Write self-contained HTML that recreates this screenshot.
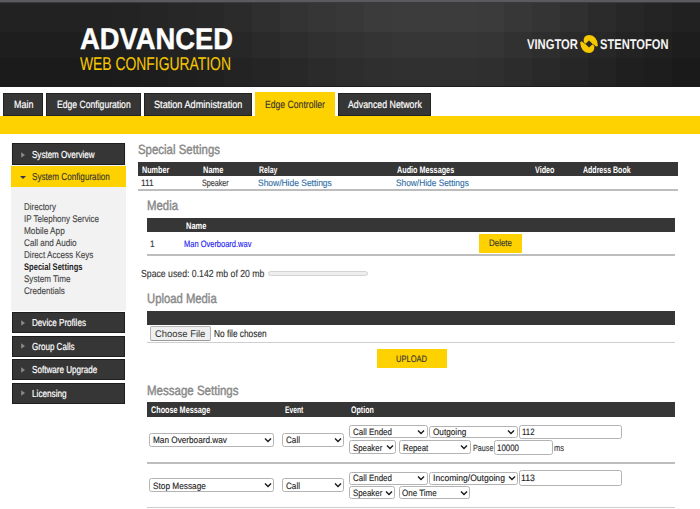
<!DOCTYPE html>
<html><head><meta charset="utf-8"><style>
html,body{margin:0;padding:0;width:700px;height:509px;overflow:hidden;background:#fff;}
body{position:relative;font-family:"Liberation Sans",sans-serif;}
.t{position:absolute;white-space:nowrap;transform-origin:0 0;text-rendering:geometricPrecision;}
#hdr{display:none;
background:linear-gradient(90deg,#1e1e1e 0%,#222 20%,#2e2e2e 40%,#353535 58%,#2a2a2a 75%,#1c1c1c 100%);}
#hdr:before{content:"";position:absolute;left:0;top:0;width:700px;height:2px;background:#5a5b5f;}
#hdr:after{content:"";position:absolute;left:0;top:2px;width:700px;height:1px;background:#1a1a1a;}
</style></head><body>
<div id="hdr"></div>
<div style="position:absolute;left:0px;top:2px;width:28px;height:30px;background:rgb(34,34,34)"></div>
<div style="position:absolute;left:0px;top:32px;width:28px;height:26px;background:rgb(30,30,30)"></div>
<div style="position:absolute;left:0px;top:58px;width:28px;height:28px;background:rgb(27,27,27)"></div>
<div style="position:absolute;left:28px;top:2px;width:28px;height:30px;background:rgb(34,34,34)"></div>
<div style="position:absolute;left:28px;top:32px;width:28px;height:26px;background:rgb(30,30,30)"></div>
<div style="position:absolute;left:28px;top:58px;width:28px;height:28px;background:rgb(27,27,27)"></div>
<div style="position:absolute;left:56px;top:2px;width:28px;height:30px;background:rgb(34,34,34)"></div>
<div style="position:absolute;left:56px;top:32px;width:28px;height:26px;background:rgb(30,30,30)"></div>
<div style="position:absolute;left:56px;top:58px;width:28px;height:28px;background:rgb(27,27,27)"></div>
<div style="position:absolute;left:84px;top:2px;width:28px;height:30px;background:rgb(34,34,34)"></div>
<div style="position:absolute;left:84px;top:32px;width:28px;height:26px;background:rgb(31,31,31)"></div>
<div style="position:absolute;left:84px;top:58px;width:28px;height:28px;background:rgb(27,27,27)"></div>
<div style="position:absolute;left:112px;top:2px;width:28px;height:30px;background:rgb(35,35,35)"></div>
<div style="position:absolute;left:112px;top:32px;width:28px;height:26px;background:rgb(31,31,31)"></div>
<div style="position:absolute;left:112px;top:58px;width:28px;height:28px;background:rgb(28,28,28)"></div>
<div style="position:absolute;left:140px;top:2px;width:28px;height:30px;background:rgb(37,37,37)"></div>
<div style="position:absolute;left:140px;top:32px;width:28px;height:26px;background:rgb(33,33,33)"></div>
<div style="position:absolute;left:140px;top:58px;width:28px;height:28px;background:rgb(29,29,29)"></div>
<div style="position:absolute;left:168px;top:2px;width:28px;height:30px;background:rgb(39,39,39)"></div>
<div style="position:absolute;left:168px;top:32px;width:28px;height:26px;background:rgb(34,34,34)"></div>
<div style="position:absolute;left:168px;top:58px;width:28px;height:28px;background:rgb(31,31,31)"></div>
<div style="position:absolute;left:196px;top:2px;width:28px;height:30px;background:rgb(40,40,40)"></div>
<div style="position:absolute;left:196px;top:32px;width:28px;height:26px;background:rgb(36,36,36)"></div>
<div style="position:absolute;left:196px;top:58px;width:28px;height:28px;background:rgb(32,32,32)"></div>
<div style="position:absolute;left:224px;top:2px;width:28px;height:30px;background:rgb(43,43,43)"></div>
<div style="position:absolute;left:224px;top:32px;width:28px;height:26px;background:rgb(39,39,39)"></div>
<div style="position:absolute;left:224px;top:58px;width:28px;height:28px;background:rgb(35,35,35)"></div>
<div style="position:absolute;left:252px;top:2px;width:28px;height:30px;background:rgb(47,47,47)"></div>
<div style="position:absolute;left:252px;top:32px;width:28px;height:26px;background:rgb(42,42,42)"></div>
<div style="position:absolute;left:252px;top:58px;width:28px;height:28px;background:rgb(37,37,37)"></div>
<div style="position:absolute;left:280px;top:2px;width:28px;height:30px;background:rgb(51,51,51)"></div>
<div style="position:absolute;left:280px;top:32px;width:28px;height:26px;background:rgb(45,45,45)"></div>
<div style="position:absolute;left:280px;top:58px;width:28px;height:28px;background:rgb(40,40,40)"></div>
<div style="position:absolute;left:308px;top:2px;width:28px;height:30px;background:rgb(54,54,54)"></div>
<div style="position:absolute;left:308px;top:32px;width:28px;height:26px;background:rgb(48,48,48)"></div>
<div style="position:absolute;left:308px;top:58px;width:28px;height:28px;background:rgb(43,43,43)"></div>
<div style="position:absolute;left:336px;top:2px;width:28px;height:30px;background:rgb(56,56,56)"></div>
<div style="position:absolute;left:336px;top:32px;width:28px;height:26px;background:rgb(50,50,50)"></div>
<div style="position:absolute;left:336px;top:58px;width:28px;height:28px;background:rgb(45,45,45)"></div>
<div style="position:absolute;left:364px;top:2px;width:28px;height:30px;background:rgb(59,59,59)"></div>
<div style="position:absolute;left:364px;top:32px;width:28px;height:26px;background:rgb(52,52,52)"></div>
<div style="position:absolute;left:364px;top:58px;width:28px;height:28px;background:rgb(47,47,47)"></div>
<div style="position:absolute;left:392px;top:2px;width:28px;height:30px;background:rgb(60,60,60)"></div>
<div style="position:absolute;left:392px;top:32px;width:28px;height:26px;background:rgb(54,54,54)"></div>
<div style="position:absolute;left:392px;top:58px;width:28px;height:28px;background:rgb(48,48,48)"></div>
<div style="position:absolute;left:420px;top:2px;width:28px;height:30px;background:rgb(60,60,60)"></div>
<div style="position:absolute;left:420px;top:32px;width:28px;height:26px;background:rgb(54,54,54)"></div>
<div style="position:absolute;left:420px;top:58px;width:28px;height:28px;background:rgb(48,48,48)"></div>
<div style="position:absolute;left:448px;top:2px;width:28px;height:30px;background:rgb(60,60,60)"></div>
<div style="position:absolute;left:448px;top:32px;width:28px;height:26px;background:rgb(54,54,54)"></div>
<div style="position:absolute;left:448px;top:58px;width:28px;height:28px;background:rgb(48,48,48)"></div>
<div style="position:absolute;left:476px;top:2px;width:28px;height:30px;background:rgb(59,59,59)"></div>
<div style="position:absolute;left:476px;top:32px;width:28px;height:26px;background:rgb(53,53,53)"></div>
<div style="position:absolute;left:476px;top:58px;width:28px;height:28px;background:rgb(47,47,47)"></div>
<div style="position:absolute;left:504px;top:2px;width:28px;height:30px;background:rgb(55,55,55)"></div>
<div style="position:absolute;left:504px;top:32px;width:28px;height:26px;background:rgb(49,49,49)"></div>
<div style="position:absolute;left:504px;top:58px;width:28px;height:28px;background:rgb(44,44,44)"></div>
<div style="position:absolute;left:532px;top:2px;width:28px;height:30px;background:rgb(52,52,52)"></div>
<div style="position:absolute;left:532px;top:32px;width:28px;height:26px;background:rgb(46,46,46)"></div>
<div style="position:absolute;left:532px;top:58px;width:28px;height:28px;background:rgb(41,41,41)"></div>
<div style="position:absolute;left:560px;top:2px;width:28px;height:30px;background:rgb(48,48,48)"></div>
<div style="position:absolute;left:560px;top:32px;width:28px;height:26px;background:rgb(42,42,42)"></div>
<div style="position:absolute;left:560px;top:58px;width:28px;height:28px;background:rgb(38,38,38)"></div>
<div style="position:absolute;left:588px;top:2px;width:28px;height:30px;background:rgb(43,43,43)"></div>
<div style="position:absolute;left:588px;top:32px;width:28px;height:26px;background:rgb(39,39,39)"></div>
<div style="position:absolute;left:588px;top:58px;width:28px;height:28px;background:rgb(35,35,35)"></div>
<div style="position:absolute;left:616px;top:2px;width:28px;height:30px;background:rgb(39,39,39)"></div>
<div style="position:absolute;left:616px;top:32px;width:28px;height:26px;background:rgb(35,35,35)"></div>
<div style="position:absolute;left:616px;top:58px;width:28px;height:28px;background:rgb(31,31,31)"></div>
<div style="position:absolute;left:644px;top:2px;width:28px;height:30px;background:rgb(36,36,36)"></div>
<div style="position:absolute;left:644px;top:32px;width:28px;height:26px;background:rgb(32,32,32)"></div>
<div style="position:absolute;left:644px;top:58px;width:28px;height:28px;background:rgb(29,29,29)"></div>
<div style="position:absolute;left:672px;top:2px;width:28px;height:30px;background:rgb(33,33,33)"></div>
<div style="position:absolute;left:672px;top:32px;width:28px;height:26px;background:rgb(29,29,29)"></div>
<div style="position:absolute;left:672px;top:58px;width:28px;height:28px;background:rgb(26,26,26)"></div>
<div style="position:absolute;left:700px;top:2px;width:28px;height:30px;background:rgb(30,30,30)"></div>
<div style="position:absolute;left:700px;top:32px;width:28px;height:26px;background:rgb(27,27,27)"></div>
<div style="position:absolute;left:700px;top:58px;width:28px;height:28px;background:rgb(24,24,24)"></div>
<div style="position:absolute;left:0px;top:0px;width:700px;height:2px;background:#5a5b5f"></div>
<div style="position:absolute;left:0px;top:2px;width:700px;height:1px;background:#3a3a3c"></div>
<div style="position:absolute;left:0px;top:86px;width:700px;height:1px;background:#1c1c1c"></div>
<div class="t" style="left:80px;top:25px;font-size:29.9px;line-height:29.9px;color:#fff;font-weight:bold;transform:scaleX(0.9149);-webkit-text-stroke:0.4px #fff;">ADVANCED</div>
<div class="t" style="left:80.3px;top:55px;font-size:18.6px;line-height:18.6px;color:#f5c800;transform:scaleX(0.7468);-webkit-text-stroke:0.1px #f5c800;">WEB CONFIGURATION</div>
<div class="t" style="left:527px;top:37px;font-size:14.1px;line-height:14.1px;color:#f4f4f4;font-weight:bold;transform:scaleX(0.7971);">VINGTOR</div>
<div class="t" style="left:600px;top:37px;font-size:14.1px;line-height:14.1px;color:#f4f4f4;font-weight:bold;transform:scaleX(0.7901);">STENTOFON</div>
<svg style="position:absolute;left:578.8px;top:33.9px" width="20" height="20" viewBox="-10 -10 20 20">
<g fill="#f5c800">
<path id="lp" d="M -3.5,-0.3 L -5.3,-2.1 Q -6,-8.9 0.3,-8.9 Q 7.8,-8.6 8.8,1.0 Q 8.9,2.9 7.2,2.4 L 3.7,0 L 0,-3.6 Z"/>
<use href="#lp" transform="rotate(180)"/>
</g>
</svg>
<div style="position:absolute;left:3px;top:93px;width:40px;height:23px;background:#363636;box-shadow:inset 0 0 0 1px #222"></div>
<div class="t" style="left:13.6px;top:100px;font-size:10.5px;line-height:10.5px;color:#fff;transform:scaleX(0.8524);-webkit-text-stroke:0.2px;">Main</div>
<div style="position:absolute;left:46px;top:93px;width:95px;height:23px;background:#363636;box-shadow:inset 0 0 0 1px #222"></div>
<div class="t" style="left:56.6px;top:100px;font-size:10.5px;line-height:10.5px;color:#fff;transform:scaleX(0.8198);-webkit-text-stroke:0.2px;">Edge Configuration</div>
<div style="position:absolute;left:144px;top:93px;width:108px;height:23px;background:#363636;box-shadow:inset 0 0 0 1px #222"></div>
<div class="t" style="left:154px;top:100px;font-size:10.5px;line-height:10.5px;color:#fff;transform:scaleX(0.8705);-webkit-text-stroke:0.2px;">Station Administration</div>
<div style="position:absolute;left:255px;top:92px;width:80px;height:24px;background:#fed100"></div>
<div class="t" style="left:265px;top:100px;font-size:10.5px;line-height:10.5px;color:#333;transform:scaleX(0.8224);-webkit-text-stroke:0.12px;">Edge Controller</div>
<div style="position:absolute;left:338px;top:93px;width:93px;height:23px;background:#363636;box-shadow:inset 0 0 0 1px #222"></div>
<div class="t" style="left:348.1px;top:100px;font-size:10.5px;line-height:10.5px;color:#fff;transform:scaleX(0.8374);-webkit-text-stroke:0.2px;">Advanced Network</div>
<div style="position:absolute;left:0px;top:116px;width:700px;height:18.2px;background:#fed100"></div>
<div style="position:absolute;left:11px;top:141px;width:114.5px;height:169.5px;background:#f2f2f2"></div>
<div style="position:absolute;left:11px;top:141px;width:114.5px;height:2px;background:#fff"></div>
<div style="position:absolute;left:12px;top:143px;width:112.5px;height:21.5px;background:#363636;box-shadow:inset 0 0 0 1px #1e1e1e"></div>
<div class="t" style="left:32.3px;top:151px;font-size:10.1px;line-height:10.1px;color:#fff;transform:scaleX(0.7967);-webkit-text-stroke:0.2px;">System Overview</div>
<svg style="position:absolute;left:21px;top:151.8px" width="5" height="6" viewBox="0 0 5 6"><path d="M0.2,0.3 L4,3 L0.2,5.7 Z" fill="#8a8a8a"/></svg>
<div style="position:absolute;left:11px;top:166px;width:114.5px;height:21px;background:#fed100"></div>
<div class="t" style="left:32px;top:173px;font-size:10.1px;line-height:10.1px;color:#333;transform:scaleX(0.8057);-webkit-text-stroke:0.12px;">System Configuration</div>
<div style="position:absolute;left:20px;top:176px;width:0;height:0;border-top:3px solid #2f3550;border-left:3.5px solid transparent;border-right:3.5px solid transparent"></div>
<div class="t" style="left:23.7px;top:203px;font-size:9.7px;line-height:9.7px;color:#444;transform:scaleX(0.8246);-webkit-text-stroke:0.12px;">Directory</div>
<div class="t" style="left:23.7px;top:215px;font-size:9.7px;line-height:9.7px;color:#444;transform:scaleX(0.8262);-webkit-text-stroke:0.12px;">IP Telephony Service</div>
<div class="t" style="left:23.7px;top:227px;font-size:9.7px;line-height:9.7px;color:#444;transform:scaleX(0.8501);-webkit-text-stroke:0.12px;">Mobile App</div>
<div class="t" style="left:23.7px;top:239px;font-size:9.7px;line-height:9.7px;color:#444;transform:scaleX(0.8408);-webkit-text-stroke:0.12px;">Call and Audio</div>
<div class="t" style="left:23.7px;top:251px;font-size:9.7px;line-height:9.7px;color:#444;transform:scaleX(0.8372);-webkit-text-stroke:0.12px;">Direct Access Keys</div>
<div class="t" style="left:23.7px;top:263px;font-size:9.6px;line-height:9.6px;color:#222;font-weight:bold;transform:scaleX(0.7889);">Special Settings</div>
<div class="t" style="left:23.7px;top:275px;font-size:9.7px;line-height:9.7px;color:#444;transform:scaleX(0.8313);-webkit-text-stroke:0.12px;">System Time</div>
<div class="t" style="left:23.7px;top:287px;font-size:9.7px;line-height:9.7px;color:#444;transform:scaleX(0.8316);-webkit-text-stroke:0.12px;">Credentials</div>
<div style="position:absolute;left:12px;top:312.3px;width:112.5px;height:21.0px;background:#363636;box-shadow:inset 0 0 0 1px #1e1e1e"></div>
<div class="t" style="left:32.3px;top:319px;font-size:10.1px;line-height:10.1px;color:#fff;transform:scaleX(0.8017);-webkit-text-stroke:0.2px;">Device Profiles</div>
<svg style="position:absolute;left:21px;top:319.7px" width="5" height="6" viewBox="0 0 5 6"><path d="M0.2,0.3 L4,3 L0.2,5.7 Z" fill="#8a8a8a"/></svg>
<div style="position:absolute;left:12px;top:335.8px;width:112.5px;height:21.0px;background:#363636;box-shadow:inset 0 0 0 1px #1e1e1e"></div>
<div class="t" style="left:32.3px;top:343px;font-size:10.1px;line-height:10.1px;color:#fff;transform:scaleX(0.7970);-webkit-text-stroke:0.2px;">Group Calls</div>
<svg style="position:absolute;left:21px;top:343.2px" width="5" height="6" viewBox="0 0 5 6"><path d="M0.2,0.3 L4,3 L0.2,5.7 Z" fill="#8a8a8a"/></svg>
<div style="position:absolute;left:12px;top:359.3px;width:112.5px;height:21.0px;background:#363636;box-shadow:inset 0 0 0 1px #1e1e1e"></div>
<div class="t" style="left:32.3px;top:366px;font-size:10.1px;line-height:10.1px;color:#fff;transform:scaleX(0.8021);-webkit-text-stroke:0.2px;">Software Upgrade</div>
<svg style="position:absolute;left:21px;top:366.7px" width="5" height="6" viewBox="0 0 5 6"><path d="M0.2,0.3 L4,3 L0.2,5.7 Z" fill="#8a8a8a"/></svg>
<div style="position:absolute;left:12px;top:382.8px;width:112.5px;height:21.0px;background:#363636;box-shadow:inset 0 0 0 1px #1e1e1e"></div>
<div class="t" style="left:32.3px;top:390px;font-size:10.1px;line-height:10.1px;color:#fff;transform:scaleX(0.8131);-webkit-text-stroke:0.2px;">Licensing</div>
<svg style="position:absolute;left:21px;top:390.2px" width="5" height="6" viewBox="0 0 5 6"><path d="M0.2,0.3 L4,3 L0.2,5.7 Z" fill="#8a8a8a"/></svg>
<div class="t" style="left:138px;top:143px;font-size:13.4px;line-height:13.4px;color:#8a8a8a;transform:scaleX(0.8534);-webkit-text-stroke:0.45px #8a8a8a;">Special Settings</div>
<div style="position:absolute;left:138px;top:162px;width:539.5px;height:14px;background:#363636"></div>
<div class="t" style="left:141.9px;top:166px;font-size:9.6px;line-height:9.6px;color:#fff;font-weight:bold;transform:scaleX(0.7499);">Number</div>
<div class="t" style="left:203.4px;top:166px;font-size:9.6px;line-height:9.6px;color:#fff;font-weight:bold;transform:scaleX(0.7764);">Name</div>
<div class="t" style="left:259.4px;top:166px;font-size:9.6px;line-height:9.6px;color:#fff;font-weight:bold;transform:scaleX(0.7144);">Relay</div>
<div class="t" style="left:397.2px;top:166px;font-size:9.6px;line-height:9.6px;color:#fff;font-weight:bold;transform:scaleX(0.7551);">Audio Messages</div>
<div class="t" style="left:535px;top:166px;font-size:9.6px;line-height:9.6px;color:#fff;font-weight:bold;transform:scaleX(0.7472);">Video</div>
<div class="t" style="left:583.3px;top:166px;font-size:9.6px;line-height:9.6px;color:#fff;font-weight:bold;transform:scaleX(0.7314);">Address Book</div>
<div class="t" style="left:141px;top:178px;font-size:9.4px;line-height:9.4px;color:#333;transform:scaleX(0.8900);-webkit-text-stroke:0.12px;">111</div>
<div class="t" style="left:202px;top:178px;font-size:9.4px;line-height:9.4px;color:#333;transform:scaleX(0.7655);-webkit-text-stroke:0.12px;">Speaker</div>
<div class="t" style="left:258px;top:178px;font-size:9.4px;line-height:9.4px;color:#2e6da4;transform:scaleX(0.9021);-webkit-text-stroke:0.12px;">Show/Hide Settings</div>
<div class="t" style="left:395.6px;top:178px;font-size:9.4px;line-height:9.4px;color:#2e6da4;transform:scaleX(0.8899);-webkit-text-stroke:0.12px;">Show/Hide Settings</div>
<div style="position:absolute;left:138px;top:189px;width:539.5px;height:2px;background:#bdbdbd"></div>
<div class="t" style="left:147px;top:199px;font-size:13.4px;line-height:13.4px;color:#8a8a8a;transform:scaleX(0.8494);-webkit-text-stroke:0.45px #8a8a8a;">Media</div>
<div style="position:absolute;left:147px;top:218px;width:528px;height:14.3px;background:#363636"></div>
<div class="t" style="left:186px;top:222px;font-size:9.6px;line-height:9.6px;color:#fff;font-weight:bold;transform:scaleX(0.7764);">Name</div>
<div class="t" style="left:149.5px;top:239px;font-size:9.4px;line-height:9.4px;color:#333;transform:scaleX(0.8900);-webkit-text-stroke:0.12px;">1</div>
<div class="t" style="left:184px;top:239px;font-size:9.4px;line-height:9.4px;color:#1e1ef0;transform:scaleX(0.7987);-webkit-text-stroke:0.15px #1e1ef0;">Man Overboard.wav</div>
<div style="position:absolute;left:478.6px;top:234px;width:43.4px;height:19px;background:#fed100"></div>
<div class="t" style="left:489px;top:238px;font-size:9.4px;line-height:9.4px;color:#333;transform:scaleX(0.8465);-webkit-text-stroke:0.12px;">Delete</div>
<div style="position:absolute;left:147px;top:254px;width:528px;height:2px;background:#bdbdbd"></div>
<div class="t" style="left:141px;top:270px;font-size:10.2px;line-height:10.2px;color:#333;transform:scaleX(0.8548);-webkit-text-stroke:0.12px;">Space used: 0.142 mb of 20 mb</div>
<div style="position:absolute;left:268px;top:271px;width:99.5px;height:5px;background:#eeeeee;border:1px solid #d3d3d3;border-radius:3px;box-sizing:border-box"></div>
<div class="t" style="left:147px;top:292px;font-size:13.4px;line-height:13.4px;color:#8a8a8a;transform:scaleX(0.8430);-webkit-text-stroke:0.45px #8a8a8a;">Upload Media</div>
<div style="position:absolute;left:147px;top:311px;width:527.5px;height:14.3px;background:#363636"></div>
<div style="position:absolute;left:149.5px;top:326.2px;width:61.0px;height:14.8px;background:#efefef;border:1px solid #b5b5b5;border-bottom-color:#9a9a9a;border-radius:2px;box-sizing:border-box"></div>
<div class="t" style="left:154.8px;top:330px;font-size:9.7px;line-height:9.7px;color:#333;transform:scaleX(0.9737);">Choose File</div>
<div class="t" style="left:214.4px;top:330px;font-size:10.2px;line-height:10.2px;color:#222;transform:scaleX(0.8153);-webkit-text-stroke:0.1px;">No file chosen</div>
<div style="position:absolute;left:147px;top:342px;width:527.5px;height:1px;background:#cfcfcf"></div>
<div style="position:absolute;left:377px;top:349px;width:70px;height:19px;background:#fed100"></div>
<div class="t" style="left:396.3px;top:355px;font-size:9.5px;line-height:9.5px;color:#333;transform:scaleX(0.7935);-webkit-text-stroke:0.12px;">UPLOAD</div>
<div class="t" style="left:147px;top:384px;font-size:13.4px;line-height:13.4px;color:#8a8a8a;transform:scaleX(0.8600);-webkit-text-stroke:0.45px #8a8a8a;">Message Settings</div>
<div style="position:absolute;left:147px;top:402px;width:527.5px;height:14.5px;background:#363636"></div>
<div class="t" style="left:150.7px;top:406px;font-size:9.6px;line-height:9.6px;color:#fff;font-weight:bold;transform:scaleX(0.7561);">Choose Message</div>
<div class="t" style="left:284.6px;top:406px;font-size:9.6px;line-height:9.6px;color:#fff;font-weight:bold;transform:scaleX(0.7000);">Event</div>
<div class="t" style="left:351px;top:406px;font-size:9.6px;line-height:9.6px;color:#fff;font-weight:bold;transform:scaleX(0.7373);">Option</div>
<div style="position:absolute;left:149.2px;top:433px;width:125.3px;height:13.5px;background:#fff;border:1px solid #b3b3b3;border-radius:2.5px;box-sizing:border-box"></div>
<div class="t" style="left:153px;top:436px;font-size:9.2px;line-height:9.2px;color:#222;transform:scaleX(0.8933);-webkit-text-stroke:0.12px;">Man Overboard.wav</div>
<svg style="position:absolute;left:263.9px;top:436.8px" width="8" height="6" viewBox="0 0 8 6"><path d="M1,1.5 L4,4.5 L7,1.5" fill="none" stroke="#1a1a1a" stroke-width="1.4"/></svg>
<div style="position:absolute;left:282.2px;top:433px;width:62.2px;height:13.5px;background:#fff;border:1px solid #b3b3b3;border-radius:2.5px;box-sizing:border-box"></div>
<div class="t" style="left:286px;top:436px;font-size:9.2px;line-height:9.2px;color:#222;transform:scaleX(0.8834);-webkit-text-stroke:0.12px;">Call</div>
<svg style="position:absolute;left:333.8px;top:436.8px" width="8" height="6" viewBox="0 0 8 6"><path d="M1,1.5 L4,4.5 L7,1.5" fill="none" stroke="#1a1a1a" stroke-width="1.4"/></svg>
<div style="position:absolute;left:349px;top:425.4px;width:79px;height:12.9px;background:#fff;border:1px solid #b3b3b3;border-radius:2.5px;box-sizing:border-box"></div>
<div class="t" style="left:353px;top:428px;font-size:9.2px;line-height:9.2px;color:#222;transform:scaleX(0.8665);-webkit-text-stroke:0.12px;">Call Ended</div>
<svg style="position:absolute;left:417.4px;top:428.9px" width="8" height="6" viewBox="0 0 8 6"><path d="M1,1.5 L4,4.5 L7,1.5" fill="none" stroke="#1a1a1a" stroke-width="1.4"/></svg>
<div style="position:absolute;left:429px;top:425.5px;width:88.7px;height:12.7px;background:#fff;border:1px solid #b3b3b3;border-radius:2.5px;box-sizing:border-box"></div>
<div class="t" style="left:432.9px;top:428px;font-size:9.2px;line-height:9.2px;color:#222;transform:scaleX(0.8918);-webkit-text-stroke:0.12px;">Outgoing</div>
<svg style="position:absolute;left:507.1px;top:428.9px" width="8" height="6" viewBox="0 0 8 6"><path d="M1,1.5 L4,4.5 L7,1.5" fill="none" stroke="#1a1a1a" stroke-width="1.4"/></svg>
<div style="position:absolute;left:519px;top:424.6px;width:102.5px;height:14.4px;background:#fff;border:1px solid #b3b3b3;border-radius:2.5px;box-sizing:border-box"></div>
<div class="t" style="left:522.4px;top:428px;font-size:9.2px;line-height:9.2px;color:#222;transform:scaleX(0.8522);-webkit-text-stroke:0.12px;">112</div>
<div style="position:absolute;left:348.6px;top:440.3px;width:47.6px;height:14.1px;background:#fff;border:1px solid #b3b3b3;border-radius:2.5px;box-sizing:border-box"></div>
<div class="t" style="left:353px;top:444px;font-size:9.2px;line-height:9.2px;color:#222;transform:scaleX(0.8551);-webkit-text-stroke:0.12px;">Speaker</div>
<svg style="position:absolute;left:385.6px;top:444.4px" width="8" height="6" viewBox="0 0 8 6"><path d="M1,1.5 L4,4.5 L7,1.5" fill="none" stroke="#1a1a1a" stroke-width="1.4"/></svg>
<div style="position:absolute;left:398.7px;top:440.3px;width:71.9px;height:14.1px;background:#fff;border:1px solid #b3b3b3;border-radius:2.5px;box-sizing:border-box"></div>
<div class="t" style="left:402.6px;top:444px;font-size:9.2px;line-height:9.2px;color:#222;transform:scaleX(0.8528);-webkit-text-stroke:0.12px;">Repeat</div>
<svg style="position:absolute;left:460.0px;top:444.4px" width="8" height="6" viewBox="0 0 8 6"><path d="M1,1.5 L4,4.5 L7,1.5" fill="none" stroke="#1a1a1a" stroke-width="1.4"/></svg>
<div class="t" style="left:472.5px;top:444px;font-size:9.1px;line-height:9.1px;color:#333;transform:scaleX(0.7906);-webkit-text-stroke:0.12px;">Pause</div>
<div style="position:absolute;left:494.1px;top:440.4px;width:59.2px;height:14.6px;background:#fff;border:1px solid #b3b3b3;border-radius:2.5px;box-sizing:border-box"></div>
<div class="t" style="left:497.3px;top:444px;font-size:9.2px;line-height:9.2px;color:#222;transform:scaleX(0.8599);-webkit-text-stroke:0.12px;">10000</div>
<div class="t" style="left:554px;top:444px;font-size:9.1px;line-height:9.1px;color:#333;transform:scaleX(0.8244);-webkit-text-stroke:0.12px;">ms</div>
<div style="position:absolute;left:147px;top:462px;width:527.5px;height:2px;background:#bdbdbd"></div>
<div style="position:absolute;left:149.2px;top:478px;width:125.3px;height:13.5px;background:#fff;border:1px solid #b3b3b3;border-radius:2.5px;box-sizing:border-box"></div>
<div class="t" style="left:152.8px;top:482px;font-size:9.2px;line-height:9.2px;color:#222;transform:scaleX(0.8995);-webkit-text-stroke:0.12px;">Stop Message</div>
<svg style="position:absolute;left:263.9px;top:481.8px" width="8" height="6" viewBox="0 0 8 6"><path d="M1,1.5 L4,4.5 L7,1.5" fill="none" stroke="#1a1a1a" stroke-width="1.4"/></svg>
<div style="position:absolute;left:282.2px;top:478px;width:62.2px;height:13.5px;background:#fff;border:1px solid #b3b3b3;border-radius:2.5px;box-sizing:border-box"></div>
<div class="t" style="left:286px;top:482px;font-size:9.2px;line-height:9.2px;color:#222;transform:scaleX(0.8834);-webkit-text-stroke:0.12px;">Call</div>
<svg style="position:absolute;left:333.8px;top:481.8px" width="8" height="6" viewBox="0 0 8 6"><path d="M1,1.5 L4,4.5 L7,1.5" fill="none" stroke="#1a1a1a" stroke-width="1.4"/></svg>
<div style="position:absolute;left:349px;top:471.5px;width:79px;height:13.0px;background:#fff;border:1px solid #b3b3b3;border-radius:2.5px;box-sizing:border-box"></div>
<div class="t" style="left:352.8px;top:474px;font-size:9.2px;line-height:9.2px;color:#222;transform:scaleX(0.8665);-webkit-text-stroke:0.12px;">Call Ended</div>
<svg style="position:absolute;left:417.4px;top:475.0px" width="8" height="6" viewBox="0 0 8 6"><path d="M1,1.5 L4,4.5 L7,1.5" fill="none" stroke="#1a1a1a" stroke-width="1.4"/></svg>
<div style="position:absolute;left:429.3px;top:471.5px;width:88.8px;height:13.0px;background:#fff;border:1px solid #b3b3b3;border-radius:2.5px;box-sizing:border-box"></div>
<div class="t" style="left:432.6px;top:474px;font-size:9.2px;line-height:9.2px;color:#222;transform:scaleX(0.9323);-webkit-text-stroke:0.12px;">Incoming/Outgoing</div>
<svg style="position:absolute;left:507.5px;top:475.0px" width="8" height="6" viewBox="0 0 8 6"><path d="M1,1.5 L4,4.5 L7,1.5" fill="none" stroke="#1a1a1a" stroke-width="1.4"/></svg>
<div style="position:absolute;left:519px;top:470.4px;width:102.6px;height:15.6px;background:#fff;border:1px solid #b3b3b3;border-radius:2.5px;box-sizing:border-box"></div>
<div class="t" style="left:521.4px;top:474px;font-size:9.2px;line-height:9.2px;color:#222;transform:scaleX(0.9545);-webkit-text-stroke:0.12px;">113</div>
<div style="position:absolute;left:348.6px;top:486.4px;width:46.9px;height:13.0px;background:#fff;border:1px solid #b3b3b3;border-radius:2.5px;box-sizing:border-box"></div>
<div class="t" style="left:352.8px;top:489px;font-size:9.2px;line-height:9.2px;color:#222;transform:scaleX(0.8551);-webkit-text-stroke:0.12px;">Speaker</div>
<svg style="position:absolute;left:384.9px;top:489.9px" width="8" height="6" viewBox="0 0 8 6"><path d="M1,1.5 L4,4.5 L7,1.5" fill="none" stroke="#1a1a1a" stroke-width="1.4"/></svg>
<div style="position:absolute;left:398.9px;top:486.4px;width:71.4px;height:13.0px;background:#fff;border:1px solid #b3b3b3;border-radius:2.5px;box-sizing:border-box"></div>
<div class="t" style="left:402.2px;top:489px;font-size:9.2px;line-height:9.2px;color:#222;transform:scaleX(0.8701);-webkit-text-stroke:0.12px;">One Time</div>
<svg style="position:absolute;left:459.7px;top:489.9px" width="8" height="6" viewBox="0 0 8 6"><path d="M1,1.5 L4,4.5 L7,1.5" fill="none" stroke="#1a1a1a" stroke-width="1.4"/></svg>
<div style="position:absolute;left:147px;top:507px;width:527.5px;height:1px;background:#cfcfcf"></div>
</body></html>
